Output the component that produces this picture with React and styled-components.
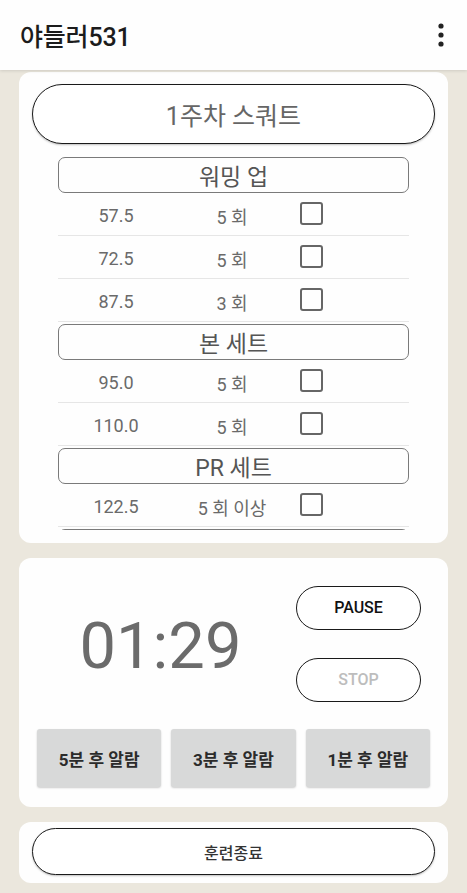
import React from "react";
import styled, { createGlobalStyle } from "styled-components";

const GlobalStyle = createGlobalStyle`
  * {
    box-sizing: border-box;
    font-family: Roboto, "Noto Sans CJK KR", sans-serif;
  }
  body {
    margin: 0;
    padding: 0;
    background-color: #ebe7dd;
  }
`;

const Header = styled.header`
  height: 70px;
  background: #fefefe;
  display: flex;
  align-items: center;
  justify-content: space-between;
  padding: 0 22px 0 20px;
  box-shadow: 0 1px 3px rgba(0, 0, 0, 0.12);
  position: relative;
  z-index: 1;
`;

const Title = styled.h1`
  margin: 0;
  font-size: 25px;
  font-weight: 500;
  color: #1c1c1c;
  letter-spacing: -0.2px;
`;

const Main = styled.main`
  padding: 2px 19px 10px;
  display: flex;
  flex-direction: column;
  gap: 15px;
`;

const Card = styled.section`
  background: #fefefe;
  border-radius: 12px;
  height: ${(p) => p.h}px;
  padding: ${(p) => p.pad};
  display: flex;
  flex-direction: column;
`;

const PillButton = styled.button`
  width: 100%;
  height: ${(p) => p.h}px;
  border: 1.5px solid #1a1a1a;
  border-radius: 30px;
  background: #fff;
  color: ${(p) => p.color || "#666"};
  font-size: ${(p) => p.size}px;
  font-weight: ${(p) => p.weight || 400};
  box-shadow: 0 1px 2px rgba(0, 0, 0, 0.25);
  flex-shrink: 0;
`;

const List = styled.div`
  margin: 13px 26px 0;
  height: 373px;
  overflow: hidden;
`;

const SectionHead = styled.div`
  height: 36px;
  border: 1.5px solid #7a7a7a;
  border-radius: 7px;
  display: flex;
  align-items: center;
  justify-content: center;
  font-size: 23px;
  color: #555;
  margin-top: ${(p) => (p.first ? 0 : 2)}px;
`;

const Row = styled.div`
  height: 43px;
  padding-top: 3px;
  display: grid;
  grid-template-columns: 116px 116px 40px;
  align-items: center;
  border-bottom: 1px solid #e6e6e6;
  font-size: 18px;
  color: #6a6a6a;
`;

const Cell = styled.span`
  text-align: center;
`;

const Check = styled.span`
  width: 23px;
  height: 23px;
  border: 2px solid #666;
  border-radius: 3px;
  margin-left: 10px;
  margin-top: -4px;
`;

const TimerTop = styled.div`
  display: flex;
  align-items: center;
  height: 115px;
`;

const Clock = styled.div`
  flex: 1;
  text-align: center;
  font-size: 65px;
  color: #6b6b6b;
  padding-right: 12px;
  margin-top: 4px;
`;

const ControlCol = styled.div`
  width: 125px;
  margin-right: 9px;
  display: flex;
  flex-direction: column;
  gap: 28px;
`;

const RoundButton = styled.button`
  height: 44px;
  border: 1.5px solid #1a1a1a;
  border-radius: 22px;
  background: #fff;
  font-size: 16px;
  font-weight: 500;
  color: ${(p) => (p.disabled ? "#bdbdbd" : "#111")};
`;

const AlarmRow = styled.div`
  margin-top: 28px;
  display: grid;
  grid-template-columns: repeat(3, 1fr);
  gap: 10px;
`;

const AlarmButton = styled.button`
  height: 58px;
  border: none;
  border-radius: 3px;
  background: #d8d9d9;
  color: #2b2b2b;
  font-size: 17px;
  font-weight: 700;
  box-shadow: 0 1px 2px rgba(0, 0, 0, 0.2);
`;

const Kebab = () => (
  <svg width="8" height="24" viewBox="0 0 8 24">
    <circle cx="4" cy="3" r="2.6" fill="#222" />
    <circle cx="4" cy="12" r="2.6" fill="#222" />
    <circle cx="4" cy="21" r="2.6" fill="#222" />
  </svg>
);

const sections = [
  {
    name: "워밍 업",
    sets: [
      ["57.5", "5 회"],
      ["72.5", "5 회"],
      ["87.5", "3 회"],
    ],
  },
  {
    name: "본 세트",
    sets: [
      ["95.0", "5 회"],
      ["110.0", "5 회"],
    ],
  },
  {
    name: "PR 세트",
    sets: [["122.5", "5 회 이상"]],
  },
  // next section, only its top edge shows above the fold
  { name: "", sets: [] },
];

export default function App() {
  return (
    <>
      <GlobalStyle />
      <Header>
        <Title>야들러531</Title>
        <Kebab />
      </Header>
      <Main>
        <Card h={471} pad="12px 13px 0">
          <PillButton h={60} size={25}>
            1주차 스쿼트
          </PillButton>
          <List>
            {sections.map((s, i) => (
              <React.Fragment key={i}>
                <SectionHead first={i === 0}>{s.name}</SectionHead>
                {s.sets.map(([w, r]) => (
                  <Row key={w}>
                    <Cell>{w}</Cell>
                    <Cell>{r}</Cell>
                    <Check />
                  </Row>
                ))}
              </React.Fragment>
            ))}
          </List>
        </Card>
        <Card h={249} pad="28px 18px 20px">
          <TimerTop>
            <Clock>01:29</Clock>
            <ControlCol>
              <RoundButton>PAUSE</RoundButton>
              <RoundButton disabled>STOP</RoundButton>
            </ControlCol>
          </TimerTop>
          <AlarmRow>
            <AlarmButton>5분 후 알람</AlarmButton>
            <AlarmButton>3분 후 알람</AlarmButton>
            <AlarmButton>1분 후 알람</AlarmButton>
          </AlarmRow>
        </Card>
        <Card h={61} pad="6px 13px">
          <PillButton h={47} size={16} weight={500} color="#333">
            훈련종료
          </PillButton>
        </Card>
      </Main>
    </>
  );
}
